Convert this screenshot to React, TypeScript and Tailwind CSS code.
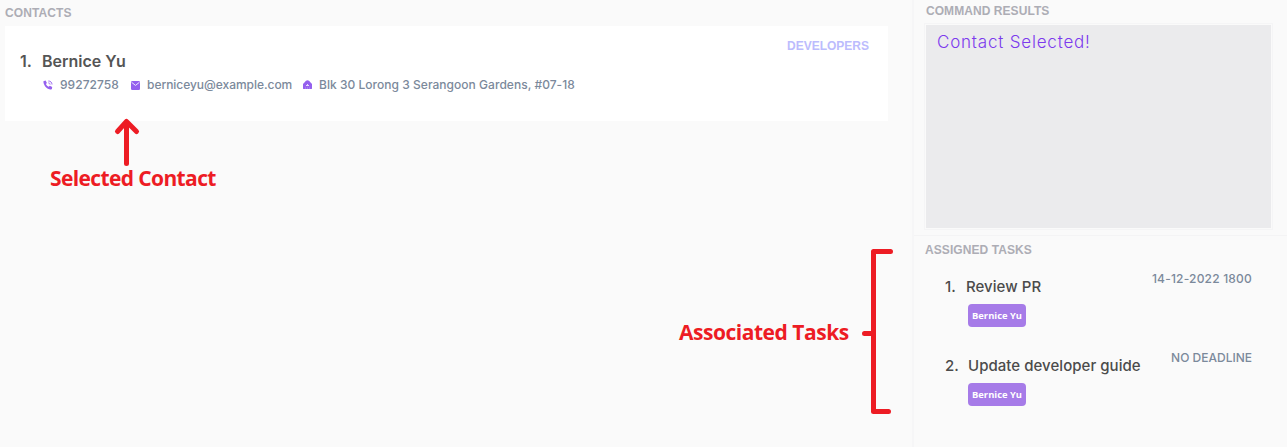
import React from "react";

const HEADING = "font-['Liberation_Sans',sans-serif] text-[12px] leading-[16px] font-bold text-[#adadb5] whitespace-nowrap";

function PhoneIcon() {
  return (
    <svg width="10" height="10" viewBox="0 0 10 10" fill="none">
      <path d="M.4 1.3 2.6.5l1.3 2.4-1 1.1c.5 1.2 1.6 2.3 2.8 2.8l1.1-1 2.4 1.3-.3 1.8C8 9.7 6.800 9.600 5.500 9.100 2.700 7.900.400 4.600.400 1.300Z" fill="#9560ee" />
      <path d="M5.300 1c2.300 0 3.700 1.400 3.700 3.500M5.300 2.900c1.200 0 1.800.6 1.800 1.700" stroke="#9560ee" strokeWidth=".9" />
    </svg>
  );
}

function MailIcon() {
  return (
    <svg width="10" height="10" viewBox="0 0 10 10" fill="none">
      <rect x="0" y="1" width="9" height="9" rx="1.200" fill="#9560ee" />
      <path d="M.6 2.300 4.500 5.400l3.900-3.100" stroke="#eee6fd" strokeWidth="1" />
    </svg>
  );
}

function HomeIcon() {
  return (
    <svg width="10" height="10" viewBox="0 0 10 10" fill="none">
      <path d="M0 4 3 .8Q4.500-.4 6 .8L9 4v4.600q0 .4-.4.4H.4Q0 9 0 8.600Z" fill="#9560ee" />
      <path d="M4.500 4v1.500M3 5.500h3" stroke="#e4d8fb" strokeWidth="1" />
      <path d="M2.500 6.800V9M4.500 6.800V9M6.500 6.800V9" stroke="#b58ff4" strokeWidth=".6" />
    </svg>
  );
}

function Task({ index, title, deadline, titleClass, deadlineClass }: {
  index: number; title: string; deadline: string; titleClass: string; deadlineClass: string;
}) {
  return (
    <li className="flex h-[79px] items-start justify-between pl-[31px] pr-[35px]">
      <div>
        <div className="flex h-5 items-center pt-4 text-[15px] font-medium leading-5 text-[#4b4b4b]">
          <span className="w-[21px] shrink-0">{index}.</span>
          <span className={titleClass}>{title}</span>
        </div>
        <div className="ml-[23px] mt-[15px] flex h-[23px] w-[58px] items-center justify-center rounded-[4px] bg-[#a67be8] font-['Open_Sans',sans-serif] text-[9.4px] font-bold leading-none text-white whitespace-nowrap">
          Bernice Yu
        </div>
      </div>
      <span className={deadlineClass}>{deadline}</span>
    </li>
  );
}

export default function App() {
  return (
    <div className="relative flex h-[447px] w-[1287px] overflow-hidden bg-[#fafafa] font-['Inter',sans-serif]">
      <main className="w-[914px] shrink-0 border-r-2 border-[#f6f6f7] pl-[5px] pt-[5px]">
        <h2 className={`${HEADING} tracking-[0.1px]`}>CONTACTS</h2>
        <section className="mt-[5px] flex h-[95px] w-[883px] justify-between bg-white pl-[15px] pr-[19px]">
          <div className="pt-[25px]">
            <div className="flex text-[16px] font-semibold leading-5 text-[#555555]">
              <span className="w-[22px]">1.</span>
              <span>Bernice Yu</span>
            </div>
            <div className="mt-[6px] flex items-center pl-[23px] text-[12px] font-medium leading-4 text-[#7b899b] whitespace-nowrap">
              <PhoneIcon />
              <span className="ml-[7px] w-[71px] tracking-[0.05px]">99272758</span>
              <MailIcon />
              <span className="ml-[6px] w-[156px] tracking-[-0.04px]">berniceyu@example.com</span>
              <HomeIcon />
              <span className="ml-[6px] tracking-[0.03px]">Blk 30 Lorong 3 Serangoon Gardens, #07-18</span>
            </div>
          </div>
          <span className="pt-[12px] font-['Liberation_Sans',sans-serif] text-[12px] font-bold leading-4 text-[#bcbcfd]">DEVELOPERS</span>
        </section>
      </main>

      <aside className="flex flex-1 flex-col">
        <section className="h-[236px] border-b border-[#f4f4f5] pl-[10px] pt-[3px]">
          <h2 className={`${HEADING} pl-[2px] tracking-[0.06px]`}>COMMAND RESULTS</h2>
          <div className="mt-[4px] h-[207px] w-[349px] border border-[#f5f5f6] p-px">
            <div className="h-full bg-[#ebebed] pl-[11px] pt-[5px] text-[17px] font-light leading-6 tracking-[0.8px] text-[#7c3aed]">
              Contact Selected!
            </div>
          </div>
        </section>
        <section className="pt-[6px]">
          <h2 className={`${HEADING} pl-[11px] tracking-[0.08px]`}>ASSIGNED TASKS</h2>
          <ol className="pt-[11px]">
            <Task index={1} title="Review PR" deadline="14-12-2022 1800" titleClass="tracking-[0.04px]" deadlineClass="pt-[2px] text-[12px] font-medium leading-4 text-[#7b899b] tracking-[0.2px]" />
            <Task index={2} title="Update developer guide" deadline="NO DEADLINE" titleClass="pl-[2px] tracking-[0.04px]" deadlineClass="pt-[2px] text-[12px] font-medium leading-4 text-[#7b899b]" />
          </ol>
        </section>
      </aside>

      <div className="absolute left-[50px] top-[164px] whitespace-nowrap font-['Open_Sans',sans-serif] text-[21px] font-bold leading-7 tracking-[-0.62px] text-[#ed1c24]">Selected Contact</div>
      <div className="absolute left-[679px] top-[318px] whitespace-nowrap font-['Open_Sans',sans-serif] text-[21px] font-bold leading-7 tracking-[-0.47px] text-[#ed1c24]">Associated Tasks</div>
      <svg className="absolute left-[112px] top-[116px]" width="30" height="52" viewBox="0 0 30 52" fill="none" stroke="#ed1c24" strokeWidth="5" strokeLinecap="round" strokeLinejoin="round">
        <path d="M14.500 47.500V6M5.500 15.500l9-10 10 10" />
      </svg>
      <svg className="absolute left-[860px] top-[245px]" width="36" height="172" viewBox="0 0 36 172" fill="none" stroke="#ed1c24" strokeWidth="5" strokeLinecap="round">
        <path d="M30.500 6.500H14M13.500 6.500v160M14 166.500h14.500M4.500 88.500h8" />
      </svg>
    </div>
  );
}
